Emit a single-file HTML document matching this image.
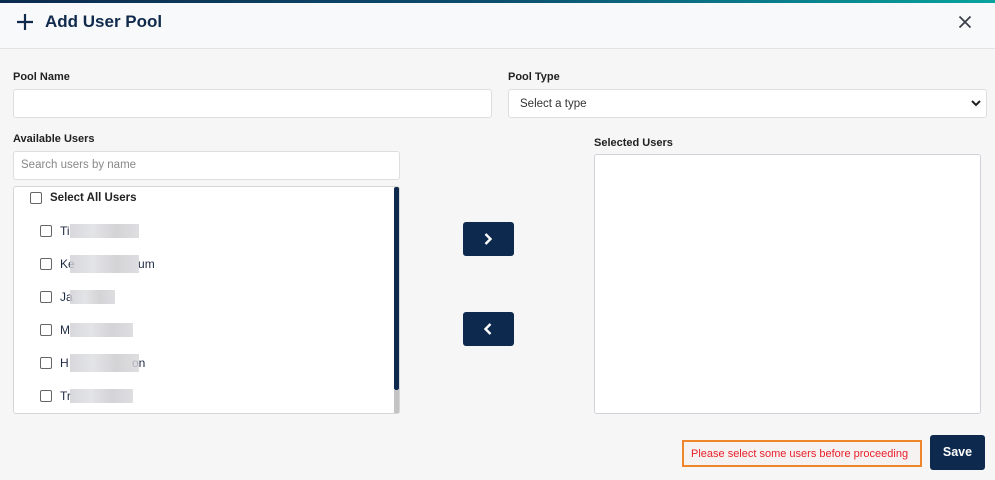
<!DOCTYPE html>
<html><head><meta charset="utf-8"><style>
*{box-sizing:border-box;margin:0;padding:0}
body{width:995px;height:480px;overflow:hidden;background:#f6f6f6;font-family:"Liberation Sans",sans-serif;position:relative;color:#222}
.a{position:absolute}
.top{left:0;top:0;width:995px;height:3px;background:linear-gradient(90deg,#0b2a4f,#0d4f6e 50%,#08a3a0)}
.hdr{left:0;top:3px;width:995px;height:46px;background:#f8f9fb;border-bottom:1px solid #e2e4e8}
.title{left:45px;top:12px;font-size:17px;font-weight:bold;color:#0f2a4c}
.lbl{font-size:11px;font-weight:bold;color:#222}
.box{background:#fff;border:1px solid #dedede;border-radius:3px}
.ph{font-size:11.5px;color:#555}
.cb{width:12px;height:12px;border:1px solid #666;border-radius:2px;background:#fff}
.nm{font-size:12px;color:#1e2a44}
.blur{height:14px;background:linear-gradient(90deg,#cfcfd4,#dcdde0,#c9c8cc,#d6d6da);opacity:.8}
.btn{background:#0d2a4e;border-radius:3px;width:51px;height:34px}
</style></head><body>
<div class="a top"></div>
<div class="a hdr"></div>
<svg class="a" style="left:16px;top:13px" width="18" height="18" viewBox="0 0 18 18"><path d="M9 1v16M1 9h16" stroke="#0f2a4c" stroke-width="2.2"/></svg>
<div class="a title">Add User Pool</div>
<svg class="a" style="left:958px;top:15px" width="14" height="14" viewBox="0 0 14 14"><path d="M1.5 1.5l11 11M12.5 1.5l-11 11" stroke="#3a3f4a" stroke-width="1.8"/></svg>

<div class="a lbl" style="left:13px;top:71px">Pool Name</div>
<div class="a box" style="left:13px;top:89px;width:479px;height:29px"></div>
<div class="a lbl" style="left:508px;top:71px">Pool Type</div>
<div class="a box" style="left:508px;top:89px;width:479px;height:29px"></div>
<div class="a ph" style="left:520px;top:98px;color:#333">Select a type</div>
<svg class="a" style="left:971px;top:99px" width="10" height="8" viewBox="0 0 10 8"><path d="M1 2l4 4 4-4" stroke="#222" stroke-width="2" fill="none"/></svg>

<div class="a lbl" style="left:13px;top:133px">Available Users</div>
<div class="a box" style="left:13px;top:151px;width:387px;height:29px"></div>
<div class="a ph" style="left:21px;top:159px;color:#888">Search users by name</div>
<div class="a box" style="left:13px;top:186px;width:387px;height:228px;border-color:#d6d6d6"></div>
<div class="a" style="left:394px;top:187px;width:5px;height:203px;background:#0d2a4e;border-radius:2px"></div>
<div class="a" style="left:394px;top:390px;width:5px;height:23px;background:#c4c4c4"></div>

<div class="a cb" style="left:30px;top:192px"></div>
<div class="a nm" style="left:50px;top:192px;font-weight:bold;color:#222;font-size:11.5px">Select All Users</div>

<div class="a cb" style="left:40px;top:225px"></div><div class="a nm" style="left:60px;top:224px">Ti</div><div class="a blur" style="left:70px;top:224px;width:69px"></div>
<div class="a cb" style="left:40px;top:258px"></div><div class="a nm" style="left:60px;top:257px">Ke&nbsp;&nbsp;&nbsp;&nbsp;&nbsp;&nbsp;&nbsp;&nbsp;&nbsp;&nbsp;&nbsp;&nbsp;&nbsp;&nbsp;&nbsp;&nbsp;&nbsp;&nbsp;&nbsp;um</div><div class="a blur" style="left:70px;top:255px;width:69px;height:18px"></div>
<div class="a cb" style="left:40px;top:291px"></div><div class="a nm" style="left:60px;top:290px">Ja</div><div class="a blur" style="left:70px;top:290px;width:45px"></div>
<div class="a cb" style="left:40px;top:324px"></div><div class="a nm" style="left:60px;top:323px">M</div><div class="a blur" style="left:70px;top:323px;width:63px"></div>
<div class="a cb" style="left:40px;top:357px"></div><div class="a nm" style="left:60px;top:356px">H&nbsp;&nbsp;&nbsp;&nbsp;&nbsp;&nbsp;&nbsp;&nbsp;&nbsp;&nbsp;&nbsp;&nbsp;&nbsp;&nbsp;&nbsp;&nbsp;&nbsp;&nbsp;&nbsp;on</div><div class="a blur" style="left:70px;top:354px;width:69px;height:18px"></div>
<div class="a cb" style="left:40px;top:390px"></div><div class="a nm" style="left:60px;top:389px">Tr</div><div class="a blur" style="left:70px;top:389px;width:63px"></div>

<div class="a btn" style="left:463px;top:222px"></div>
<svg class="a" style="left:483px;top:232px" width="10" height="14" viewBox="0 0 10 14"><path d="M2.5 2l5 5-5 5" stroke="#fff" stroke-width="2.4" fill="none"/></svg>
<div class="a btn" style="left:463px;top:312px"></div>
<svg class="a" style="left:483px;top:322px" width="10" height="14" viewBox="0 0 10 14"><path d="M7.5 2l-5 5 5 5" stroke="#fff" stroke-width="2.4" fill="none"/></svg>

<div class="a lbl" style="left:594px;top:137px">Selected Users</div>
<div class="a box" style="left:594px;top:154px;width:387px;height:260px;border-color:#cfd2d8"></div>

<div class="a" style="left:682px;top:440px;width:240px;height:27px;border:2px solid #f0862c;background:#f7f2f2"></div>
<div class="a" style="left:691px;top:448px;font-size:11px;color:#e8202a">Please select some users before proceeding</div>
<div class="a btn" style="left:930px;top:435px;width:55px;height:35px"></div>
<div class="a" style="left:930px;top:445px;width:55px;text-align:center;font-size:12.5px;font-weight:bold;color:#fff">Save</div>
</body></html>
